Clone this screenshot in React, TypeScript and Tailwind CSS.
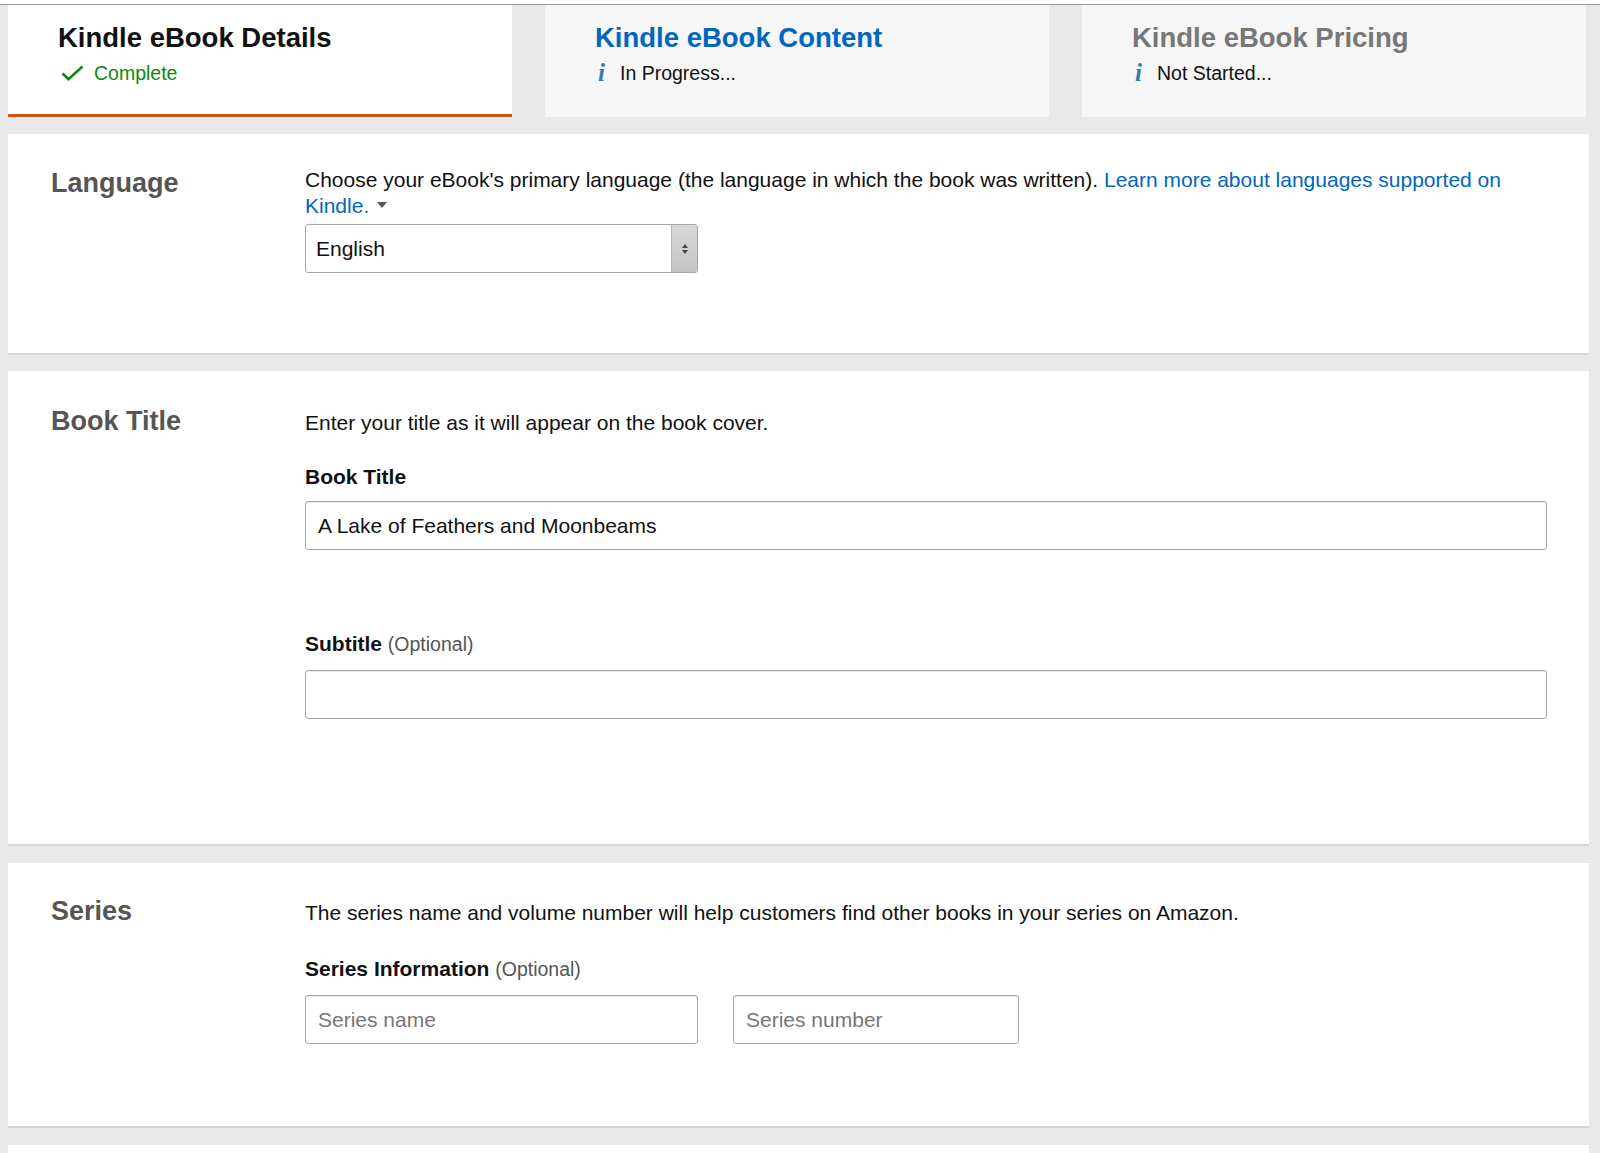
import React from "react";

const font = "font-['Liberation_Sans',Arial,Helvetica,sans-serif]";

const Check = () => (
  <svg width="23" height="16" viewBox="0 0 23 16" className="shrink-0">
    <path d="M1.5 8.5 L7.5 14.2 L21.5 1.5" fill="none" stroke="#0a8a0a" strokeWidth="2.6" />
  </svg>
);

const Info = () => (
  <span className="w-[12px] shrink-0 font-['Liberation_Serif',serif] italic font-bold text-[25px] leading-[24px] text-[#2e7cb0]">
    i
  </span>
);

const tabs = [
  { title: "Kindle eBook Details", status: "Complete", state: "done" },
  { title: "Kindle eBook Content", status: "In Progress...", state: "current" },
  { title: "Kindle eBook Pricing", status: "Not Started...", state: "todo" },
];

const inputCls =
  "h-[49px] border border-[#a6a6a6] rounded-[3px] bg-white px-[12px] text-[21px] text-[#111] outline-none shadow-[inset_0_1px_0_rgba(0,0,0,0.08)] placeholder:text-[#777]";

const App = () => {
  return (
    <div className={`min-h-screen bg-[#e8e8e8] ${font}`}>
      <div className="h-[4px] bg-white" />
      <div className="border-t border-[#999] pl-[8px] pr-[11px]">
        {/* step tabs */}
        <div className="flex gap-[33px]">
          {tabs.map((t) => (
            <div
              key={t.title}
              className={`w-[504px] h-[112px] pl-[50px] pt-[17px] ${
                t.state === "done" ? "bg-white border-b-[3px] border-[#c9561b]" : "bg-[#f6f6f6]"
              }`}
            >
              <div
                className={`text-[27.5px] leading-[32px] font-bold ${
                  t.state === "done" ? "text-[#111]" : t.state === "current" ? "text-[#0066c0]" : "text-[#777]"
                }`}
              >
                {t.title}
              </div>
              <div className="mt-[7px] flex items-center h-[24px] pl-[3px]">
                {t.state === "done" ? (
                  <>
                    <Check />
                    <span className="ml-[10px] text-[19.5px] leading-[24px] text-[#0a8a0a]">{t.status}</span>
                  </>
                ) : (
                  <>
                    <Info />
                    <span className="ml-[10px] text-[19.5px] leading-[24px] text-[#111]">{t.status}</span>
                  </>
                )}
              </div>
            </div>
          ))}
        </div>

        {/* Language */}
        <section className="mt-[17px] flex bg-white border-b-2 border-[#d6d6d6] pl-[43px] pt-[33px] pb-[80px]">
          <h2 className="w-[254px] shrink-0 text-[27px] leading-[32px] font-bold text-[#555]">Language</h2>
          <div className="flex-1 pr-[42px]">
            <p className="text-[21px] leading-[25.5px] text-[#111]">
              Choose your eBook's primary language (the language in which the book was written).{" "}
              <a className="text-[#0066c0]">Learn more about languages supported on Kindle.</a>
              <span className="ml-[8px] inline-block align-middle border-x-[5px] border-x-transparent border-t-[6px] border-t-[#555] mb-[4px]" />
            </p>
            <div className="mt-[6px] w-[393px] h-[49px] flex border border-[#a6a6a6] rounded-[3px] overflow-hidden bg-white">
              <span className="flex-1 pl-[10px] text-[21px] leading-[47px] text-[#111]">English</span>
              <span className="w-[26px] flex flex-col items-center justify-center gap-[2px] bg-gradient-to-b from-[#d8d8d8] to-[#c4c4c4] border-l border-[#b5b5b5]">
                <span className="border-x-[3px] border-x-transparent border-b-[4px] border-b-[#444]" />
                <span className="border-x-[3px] border-x-transparent border-t-[4px] border-t-[#444]" />
              </span>
            </div>
          </div>
        </section>

        {/* Book title */}
        <section className="mt-[16px] flex bg-white border-b-2 border-[#d6d6d6] pl-[43px] pb-[125px]">
          <h2 className="w-[254px] shrink-0 pt-[34px] text-[27px] leading-[32px] font-bold text-[#555]">Book Title</h2>
          <div className="flex-1 pr-[42px] pt-[39px]">
            <p className="text-[21px] leading-[26px] text-[#111]">Enter your title as it will appear on the book cover.</p>
            <div className="mt-[28px] text-[21px] leading-[26px] font-bold text-[#111]">Book Title</div>
            <input readOnly value="A Lake of Feathers and Moonbeams" className={`mt-[11px] w-full block ${inputCls}`} />
            <div className="mt-[81px] text-[21px] leading-[26px] font-bold text-[#111]">
              Subtitle <span className="font-normal text-[19.5px] text-[#555]">(Optional)</span>
            </div>
            <input readOnly value="" className={`mt-[13px] w-full block ${inputCls}`} />
          </div>
        </section>

        {/* Series */}
        <section className="mt-[17px] flex bg-white border-b-2 border-[#d6d6d6] pl-[43px] pb-[82px]">
          <h2 className="w-[254px] shrink-0 pt-[32px] text-[27px] leading-[32px] font-bold text-[#555]">Series</h2>
          <div className="flex-1 pr-[42px] pt-[37px]">
            <p className="text-[21px] leading-[26px] text-[#111]">
              The series name and volume number will help customers find other books in your series on Amazon.
            </p>
            <div className="mt-[30px] text-[21px] leading-[26px] font-bold text-[#111]">
              Series Information <span className="font-normal text-[19.5px] text-[#555]">(Optional)</span>
            </div>
            <div className="mt-[13px] flex gap-[35px]">
              <input readOnly placeholder="Series name" className={`w-[393px] ${inputCls}`} />
              <input readOnly placeholder="Series number" className={`w-[286px] ${inputCls}`} />
            </div>
          </div>
        </section>

        <section className="mt-[17px] h-[40px] bg-white" />
      </div>
    </div>
  );
};

export default App;
